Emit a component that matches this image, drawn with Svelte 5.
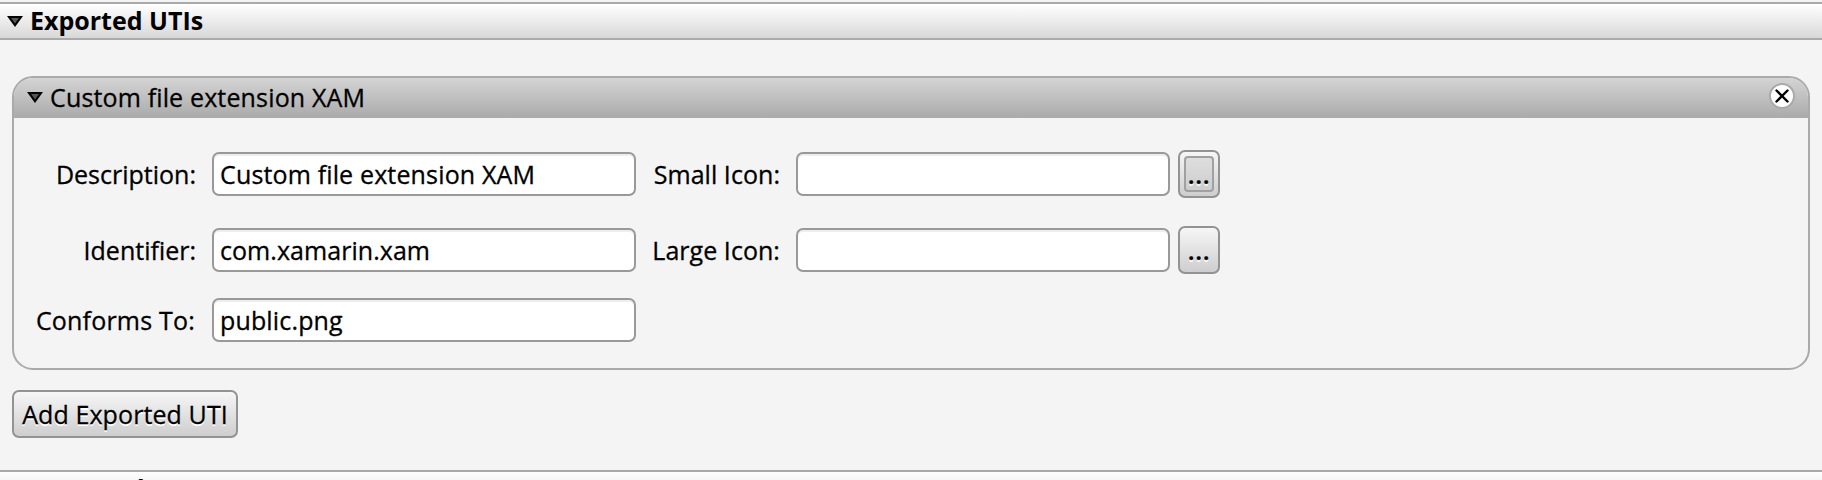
<script>
  const left = [
    { label: 'Description:', value: 'Custom file extension XAM', ls: 0, vs: 0.15 },
    { label: 'Identifier:', value: 'com.xamarin.xam', ls: 0, vs: 0.05 },
    { label: 'Conforms To:', value: 'public.png', ls: 0.2, vs: 0.15 }
  ];
  const right = [
    { label: 'Small Icon:', ls: 0.05, focused: true },
    { label: 'Large Icon:', ls: 0.05, focused: false }
  ];
</script>

{#snippet arrow()}
  <svg class="arrow" width="16" height="11" viewBox="0 0 16 11">
    <path d="M0 0H16L8 11Z" fill="#000" />
    <path d="M4 2H12L8 7.5Z" fill="#555" />
  </svg>
{/snippet}

<main>
  <header class="section">
    {@render arrow()}<h1>Exported UTIs</h1>
  </header>

  <section class="card">
    <div class="card-head">
      {@render arrow()}<span class="title">Custom file extension XAM</span>
      <svg class="close" width="26" height="26" viewBox="0 0 26 26">
        <circle cx="13" cy="13" r="12" fill="#fff" stroke="#aaa" stroke-width="2" />
        <path d="M7.5 7.5L18.5 18.5M18.5 7.5L7.5 18.5" stroke="#000" stroke-width="2.4" stroke-linecap="round" />
      </svg>
    </div>
    <div class="form">
      {#each left as f, i}
        <div class="row">
          <span class="label" style:letter-spacing="{f.ls}px">{f.label}</span>
          <div class="field" style:letter-spacing="{f.vs}px">{f.value}</div>
          {#if right[i]}
            <span class="label second" style:letter-spacing="{right[i].ls}px">{right[i].label}</span>
            <div class="field icon"></div>
            <div class="button browse" class:focused={right[i].focused}><span>...</span></div>
          {/if}
        </div>
      {/each}
    </div>
  </section>

  <div class="button add">Add Exported UTI</div>

  <header class="section next">
    {@render arrow()}<h1>Imported UTIs</h1>
  </header>
</main>

<style>
  :global(body) { margin: 0; background: #f4f4f4; }
  main {
    box-sizing: border-box;
    height: 480px;
    padding-top: 2px;
    overflow: hidden;
    background: #f4f4f4;
    color: #000;
    font: 25px/34px "Open Sans", sans-serif;
    letter-spacing: 0.15px;
    white-space: nowrap;
    -webkit-text-stroke: 0.3px #000;
  }
  svg { display: block; flex: none; }
  .section {
    display: flex;
    height: 34px;
    padding-left: 7px;
    border: solid #aaa;
    border-width: 2px 0;
    background: linear-gradient(#fff, #d8d8d8);
  }
  .section .arrow { margin-top: 12px; }
  h1 { margin: -1px 0 0 7px; font-size: 25px; font-weight: 700; line-height: 34px; letter-spacing: 0; -webkit-text-stroke: 0; }
  .next h1 { letter-spacing: -0.35px; }
  .card {
    box-sizing: border-box;
    height: 294px;
    margin: 36px 12px 0;
    border: 2px solid #aaa;
    border-radius: 21px;
    overflow: hidden;
  }
  .card-head {
    display: flex;
    height: 40px;
    padding: 0 13px;
    background: linear-gradient(#d4d4d4, #aaa);
  }
  .card-head .arrow { margin-top: 14px; }
  .title { margin: 2px 0 0 7px; }
  .close { margin: 5px 0 0 auto; }
  .form { padding-top: 32px; }
  .row { display: flex; align-items: center; height: 48px; margin-bottom: 28px; }
  .row:nth-child(2) { margin-bottom: 22px; }
  .label { width: 182px; margin-right: 16px; text-align: right; }
  .row:nth-child(3) .label { width: 181px; margin-right: 17px; }
  .second { width: 128px; margin: 0 16px; }
  .field {
    box-sizing: border-box;
    width: 424px;
    height: 44px;
    padding: 3px 0 0 6px;
    border: 2px solid #999;
    border-radius: 7px;
    background: #fff;
    box-shadow: inset 0 2px #eee;
  }
  .icon { width: 374px; }
  .button {
    box-sizing: border-box;
    display: flex;
    justify-content: center;
    height: 48px;
    padding-top: 5px;
    border: 2px solid #939393;
    border-radius: 7px;
    background: linear-gradient(#f6f6f6, #cecece);
    text-shadow: 0 2px #fff;
  }
  .browse { width: 42px; margin-left: 8px; padding: 4px; }
  .browse span {
    box-sizing: border-box;
    width: 30px;
    height: 36px;
    border: 2px solid transparent;
    border-radius: 4px;
    text-align: center;
    line-height: 32px;
    font-weight: 600;
    letter-spacing: 0.6px;
  }
  .focused span { border-color: #a0a0a0; background: linear-gradient(#dedede, #cecece); }
  .add { width: 226px; margin: 20px 0 32px 12px; letter-spacing: 0.1px; }
</style>
